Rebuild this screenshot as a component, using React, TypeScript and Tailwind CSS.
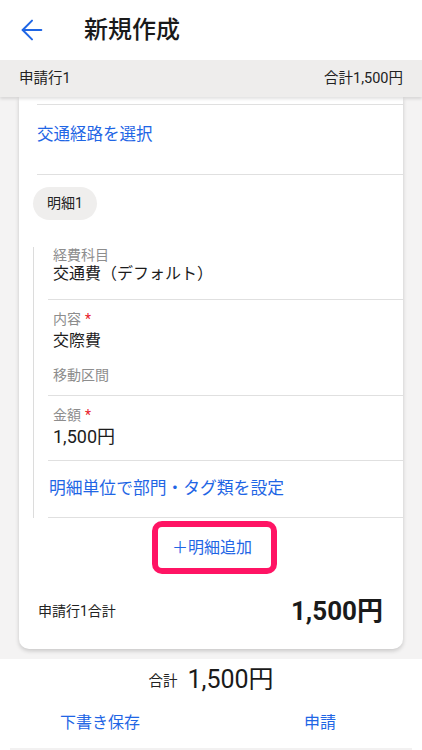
import { ArrowLeft } from 'lucide-react'

const font = { fontFamily: "Roboto, 'Noto Sans CJK JP', sans-serif" }

function Field({ label, value, required, sub, big }: { label: string; value: string; required?: boolean; sub?: string; big?: boolean }) {
  return (
    <div className="border-b border-[#e0e0e0] pl-[5px] pt-[11px] pb-[12px]">
      <div className="text-[14px] leading-4 text-[#8d8d8d]">
        {label}
        {required && <span className="ml-1 text-[#e8202a]">*</span>}
      </div>
      <div className={`mt-[3px] leading-[22px] text-[#1c1c1c] ${big ? 'text-[18px]' : 'text-[16px]'}`}>{value}</div>
      {sub && <div className="mt-[15px] text-[14px] leading-4 text-[#8d8d8d]">{sub}</div>}
    </div>
  )
}

export default function App() {
  return (
    <div className="flex h-[750px] w-[422px] flex-col overflow-hidden bg-[#f4f3f3]" style={font}>
      {/* header */}
      <div className="relative z-20 flex h-[60px] items-center bg-white">
        <ArrowLeft className="ml-4 text-[#1f66e5]" size={32} strokeWidth={1.5} />
        <h1 className="ml-9 text-[24px] font-medium leading-none text-[#1a1a1a]">新規作成</h1>
      </div>

      <div className="relative z-10 flex h-[37px] items-center justify-between bg-[#eeedec] px-[19px] text-[14.5px] text-[#222] shadow-[0_2px_3px_rgba(0,0,0,0.12)]">
        <span>申請行1</span>
        <span>合計1,500円</span>
      </div>

      {/* card */}
      <div className="mx-[19px] flex-none rounded-b-[10px] bg-white pt-[7px] shadow-[0_2px_4px_rgba(0,0,0,0.18)]">
        <div className="ml-[18px] border-t border-[#e0e0e0]" />
        <div className="ml-[18px] h-[70px] border-b border-[#e0e0e0] pt-[18px] text-[16.5px] leading-6 text-[#1f66e5]">
          交通経路を選択
        </div>

        <div className="ml-[14px] mt-3 flex h-[33px] w-16 items-center justify-center rounded-full bg-[#efeeed] text-[14px] text-[#222]">
          明細1
        </div>

        <div className="ml-[14px] mt-[27px] border-l border-[#dcdcdc] pl-[14px]">
          <div className="border-b border-[#e0e0e0] pl-[5px] pb-[14px]">
            <div className="text-[14px] leading-4 text-[#8d8d8d]">経費科目</div>
            <div className="text-[16px] leading-[22px] text-[#1c1c1c]">交通費（デフォルト）</div>
          </div>
          <Field label="内容" value="交際費" required sub="移動区間" />
          <Field label="金額" value="1,500円" required big />
          <div className="h-[57px] border-b border-[#e0e0e0] pl-px pt-[15px] text-[16.8px] leading-6 text-[#1f66e5]">
            明細単位で部門・タグ類を設定
          </div>
        </div>

        <button className="ml-[133px] mt-[3px] flex h-[53px] w-[125px] items-center justify-center rounded-[10px] border-[6px] border-[#ff1464] pr-[5px] text-[16px] text-[#1f66e5]">
          ＋明細追加
        </button>

        <div className="flex items-center justify-between pl-[19px] pr-[20px] pt-[19px] pb-[20px]">
          <span className="text-[14px] text-[#222]">申請行1合計</span>
          <span className="text-[26px] font-bold leading-9 text-[#1a1a1a]">1,500円</span>
        </div>
      </div>

      {/* footer */}
      <div className="mt-[10px] flex flex-1 flex-col bg-white">
        <div className="mt-[5px] flex items-end justify-center gap-[10px]">
          <span className="mb-[3px] text-[14.5px] text-[#222]">合計</span>
          <span className="text-[25px] leading-[32px] text-[#1a1a1a]">1,500円</span>
        </div>
        <div className="mt-[15px] flex text-[16px] leading-6 text-[#1f66e5]">
          <span className="ml-[60px]">下書き保存</span>
          <span className="ml-[164px]">申請</span>
        </div>
        <div className="mx-[10px] mt-auto h-[2px] bg-[#f2f1f1]" />
      </div>
    </div>
  )
}
